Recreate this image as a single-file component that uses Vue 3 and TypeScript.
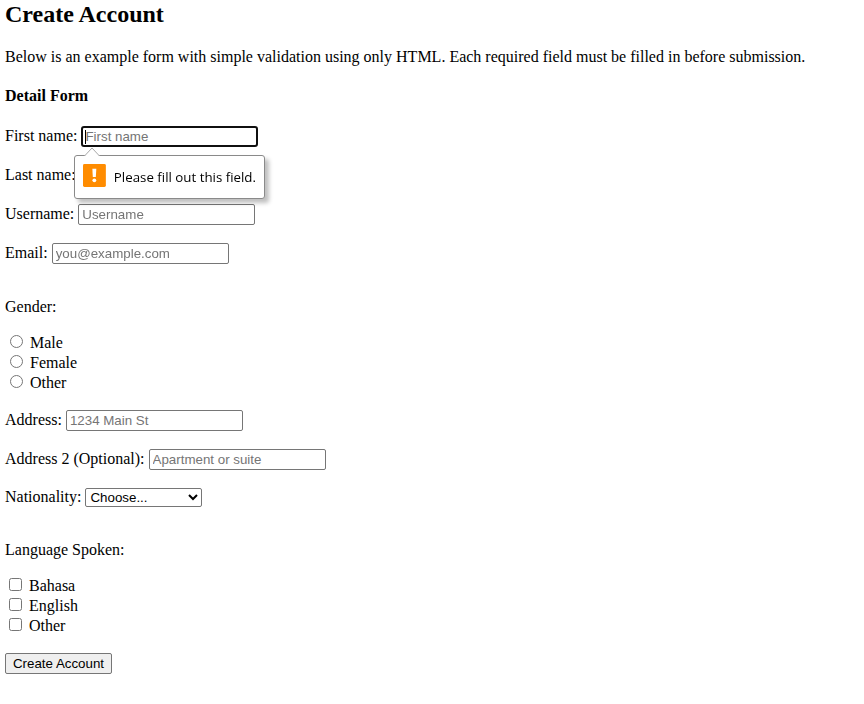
<script setup lang="ts">
import { ref, onMounted } from 'vue'

const first = ref<HTMLInputElement | null>(null)
const genders: string[] = ['Male', 'Female', 'Other']
const languages: string[] = ['Bahasa', 'English', 'Other']
onMounted(() => first.value?.focus())
</script>

<template>
  <form class="page" novalidate @submit.prevent>
    <h2>Create Account</h2>
    <p class="intro">Below is an example form with simple validation using only HTML. Each required field must be filled in before submission.</p>
    <h4>Detail Form</h4>
    <div class="row first">
      <label for="fn">First name:</label>
      <div class="field">
        <input id="fn" ref="first" class="text focused" type="text" placeholder="First name" />
        <i class="caret"></i>
      </div>
      <div class="bubble" role="alert">
        <svg class="arrow" width="18" height="9" viewBox="0 0 18 9"><path d="M1.5 9 L9 1 L16.5 9" fill="#fff" stroke="#a8a8a8" /></svg>
        <svg class="warn" width="23" height="23" viewBox="0 0 23 23"><rect width="23" height="23" rx="1.5" fill="#ff8c00" /><path d="M9.4 4.8h4l-.5 8.2h-3z" fill="#fff" /><circle cx="11.4" cy="16.3" r="1.9" fill="#fff" /></svg>
        <span>Please fill out this field.</span>
      </div>
    </div>
    <div class="row"><label for="ln">Last name:</label><input id="ln" class="text" type="text" placeholder="Last name" /></div>
    <div class="row"><label for="un">Username:</label><input id="un" class="text" type="text" placeholder="Username" /></div>
    <div class="row"><label for="em">Email:</label><input id="em" class="text" type="email" placeholder="you@example.com" /></div>
    <p class="group">Gender:</p>
    <div class="choices radios">
      <label v-for="g in genders" :key="g"><input type="radio" name="gender" :value="g" /><span>{{ g }}</span></label>
    </div>
    <div class="row"><label for="a1">Address:</label><input id="a1" class="text" type="text" placeholder="1234 Main St" /></div>
    <div class="row"><label for="a2">Address 2 (Optional):</label><input id="a2" class="text" type="text" placeholder="Apartment or suite" /></div>
    <div class="row nation"><label for="na">Nationality:</label><select id="na"><option>Choose...</option></select></div>
    <p class="group">Language Spoken:</p>
    <div class="choices checks">
      <label v-for="l in languages" :key="l"><input type="checkbox" :value="l" /><span>{{ l }}</span></label>
    </div>
    <button type="submit">Create Account</button>
  </form>
</template>

<style>
body { background: #fff; overflow: hidden; }
</style>

<style scoped>
.page { padding: 1px 5px 0; font: 16px/18px "Liberation Serif", serif; color: #000; }
h2 { margin: 0; font-size: 24px; line-height: 27px; }
.intro { margin: 20px 0 21px; white-space: nowrap; }
h4 { margin: 0 0 21px; font-size: 16px; line-height: 18px; }
.row { position: relative; display: flex; align-items: center; gap: 4px; height: 21px; margin-bottom: 18px; white-space: nowrap; }
.row > label { margin-bottom: 1px; }
.field { position: relative; display: flex; }
.text { box-sizing: border-box; width: 177px; height: 21px; margin: 0; padding: 1px 3px; border: 1px solid #767676; font: 13.333px "Liberation Sans", sans-serif; background: #fff; outline: none; border-radius: 2px; }
.text::placeholder { color: #757575; }
.focused { padding: 0 2px; border: 2px solid #101010; border-radius: 3px; caret-color: transparent; }
.caret { position: absolute; left: 4px; top: 4px; width: 1px; height: 14px; background: #000; }
.bubble { position: absolute; z-index: 2; left: 69px; top: 29px; box-sizing: border-box; width: 191px; height: 44px; padding: 0 8px; display: flex; align-items: center; gap: 8px; border: 1px solid #8a8a8a; border-radius: 3px; background: #fff; box-shadow: 4px 4px 4px rgba(0,0,0,.25); font: 13.3px "Open Sans", "Noto Sans", sans-serif; }
.arrow { position: absolute; left: 8px; top: -9px; }
.warn { margin-bottom: 4px; }
.group { margin: 34px 0 18px; }
.choices { display: flex; flex-direction: column; }
.choices label { display: flex; height: 20px; }
.choices input { width: 13px; height: 13px; margin: 1px 7px 0 5px; }
.checks input { margin-left: 4px; }
.radios { margin-bottom: 16px; }
.nation { height: 19px; }
select { width: 117px; height: 19px; margin: 0; border: 1px solid #767676; background: #fff; color: #000; font: 13.333px "Liberation Sans", sans-serif; border-radius: 2px; }
button { display: block; width: 107px; height: 21px; margin: 16px 0 0; padding: 0; border: 1px solid #767676; border-radius: 2px; background: #efefef; color: #000; font: 13.333px "Liberation Sans", sans-serif; }
</style>
